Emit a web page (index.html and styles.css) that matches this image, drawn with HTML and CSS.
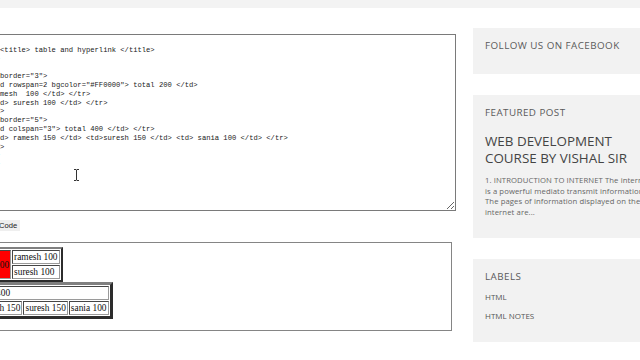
FILE: index.html
```html
<!DOCTYPE html>
<html>
<head>
<meta charset="utf-8">
<title>Table and hyperlink</title>
<link rel="stylesheet" href="styles.css">
</head>
<body>
<div class="topbar"></div>
<div class="page">
  <main class="main">
    <div class="editor">
<textarea class="code" spellcheck="false">&lt;html&gt;
&lt;head&gt; &lt;title&gt; table and hyperlink &lt;/title&gt;
&lt;/head&gt;
&lt;body&gt;
&lt;table border="3"&gt;
&lt;tr&gt; &lt;td rowspan=2 bgcolor="#FF0000"&gt; total 200 &lt;/td&gt;
&lt;td&gt; ramesh  100 &lt;/td&gt; &lt;/tr&gt;
&lt;tr&gt; &lt;td&gt; suresh 100 &lt;/td&gt; &lt;/tr&gt;
&lt;/table&gt;
&lt;table border="5"&gt;
&lt;tr&gt; &lt;td colspan="3"&gt; total 400 &lt;/td&gt; &lt;/tr&gt;
&lt;tr&gt; &lt;td&gt; ramesh 150 &lt;/td&gt; &lt;td&gt;suresh 150 &lt;/td&gt; &lt;td&gt; sania 100 &lt;/td&gt; &lt;/tr&gt;
&lt;/table&gt;
&lt;/body&gt;
&lt;/html&gt;</textarea>
      <svg class="ibeam" width="7" height="12" viewBox="0 0 7 12"><path d="M1 0.5h2l0.5 0.5 0.5-0.5h2M3.5 1v10M1 11.5h2l0.5-0.5 0.5 0.5h2" fill="none" stroke="#333" stroke-width="1"/></svg>
    </div>
    <button class="run">Run Code</button>
    <div class="output">
      <table class="t1">
        <tr><td rowspan="2" class="red">total 200</td><td>ramesh 100</td></tr>
        <tr><td>suresh 100</td></tr>
      </table>
      <table class="t2">
        <tr><td colspan="3">total 400</td></tr>
        <tr><td>ramesh 150</td><td>suresh 150</td><td>sania 100</td></tr>
      </table>
    </div>
  </main>
  <aside class="sidebar">
    <section class="widget w1">
      <h2 class="wtitle">FOLLOW US ON FACEBOOK</h2>
    </section>
    <section class="widget w2">
      <h2 class="wtitle">FEATURED POST</h2>
      <h3 class="post-title">WEB DEVELOPMENT<br>COURSE BY VISHAL SIR</h3>
      <p class="post-text">1. INTRODUCTION TO INTERNET The internet<br>is a powerful mediato transmit information.<br>The pages of information displayed on the<br>internet are...</p>
    </section>
    <section class="widget w3">
      <h2 class="wtitle">LABELS</h2>
      <ul class="labels">
        <li>HTML</li>
        <li>HTML NOTES</li>
      </ul>
    </section>
  </aside>
</div>
</body>
</html>
```
FILE: styles.css
```css
html, body {
  margin: 0;
  padding: 0;
  overflow: hidden;
  background: #ffffff;
}
body {
  width: 640px;
  height: 360px;
  font-family: "Open Sans", "Liberation Sans", sans-serif;
}
.topbar {
  height: 8px;
  background: #f3f3f3;
}
.page {
  display: flex;
  align-items: flex-start;
}
.main {
  margin-left: -33px;
  width: 489px;
  flex: none;
  padding-top: 26px;
  display: flex;
  flex-direction: column;
  align-items: flex-start;
}
.editor {
  position: relative;
  width: 489px;
}
.code {
  display: block;
  box-sizing: border-box;
  width: 489px;
  height: 177px;
  margin: 0;
  padding: 2px;
  border: 1px solid #7a7a7a;
  font-family: "Liberation Mono", monospace;
  font-size: 7.17px;
  line-height: 8.8px;
  color: #1a1a1a;
  background: #fff;
  resize: both;
  overflow: hidden;
  white-space: pre;
}
.ibeam {
  position: absolute;
  left: 106px;
  top: 135px;
}
.run {
  margin: 9px 0 0 13px;
  height: 11px;
  padding: 0 3px;
  border: none;
  background: #efefef;
  font-family: "Liberation Sans", sans-serif;
  font-size: 7.6px;
  line-height: 11px;
  color: #222;
}
.output {
  margin-top: 11px;
  box-sizing: border-box;
  width: 485px;
  height: 89px;
  border: 1px solid #858585;
  padding: 4px 0 0 3px;
}
.output table {
  font-family: "Liberation Serif", serif;
  font-size: 9.4px;
  line-height: 10px;
  color: #111;
  border-spacing: 1px;
}
.output td {
  border: 1px inset #9a9a9a;
  padding: 1px;
  white-space: nowrap;
}
.t1 {
  border: 2px outset #808080;
}
.t2 {
  border: 3px outset #808080;
}
.red {
  background: #ff0000;
}
.sidebar {
  margin-left: 17px;
  margin-top: 20px;
  width: 200px;
  flex: none;
  display: flex;
  flex-direction: column;
  gap: 21px;
}
.widget {
  background: #f2f2f2;
  padding: 12px 12px 0 12px;
}
.wtitle {
  margin: 0;
  font-size: 9.8px;
  font-weight: 400;
  letter-spacing: 0.45px;
  line-height: 12px;
  color: #5a5a5a;
}
.w1 {
  height: 34px;
}
.w2 {
  height: 131px;
}
.post-title {
  margin: 14px 0 0 0;
  font-size: 13.4px;
  font-weight: 400;
  line-height: 17px;
  color: #444;
  white-space: nowrap;
}
.post-text {
  margin: 8px 0 0 0;
  font-size: 7.7px;
  letter-spacing: 0.1px;
  line-height: 10.7px;
  color: #666;
  white-space: nowrap;
}
.w3 {
  height: 71px;
}
.labels {
  list-style: none;
  margin: 4px 0 0 0;
  padding: 0;
}
.labels li {
  font-size: 8px;
  line-height: 19px;
  color: #555;
}
```
